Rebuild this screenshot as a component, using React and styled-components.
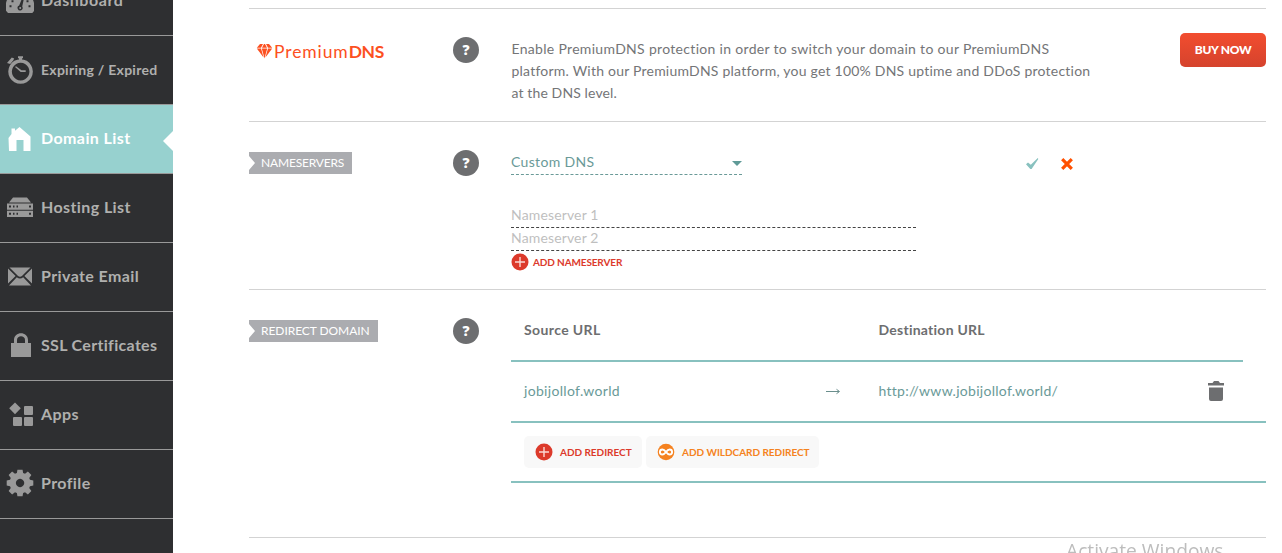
import React from "react";
import styled, { createGlobalStyle, css } from "styled-components";

const GlobalStyle = createGlobalStyle`
  *, *::before, *::after { box-sizing: border-box; }
  body {
    margin: 0;
    background: #fff;
    color: #6d6e70;
    font-family: Lato, "Open Sans", sans-serif;
    font-size: 14px;
    overflow: hidden;
  }
`;

const Page = styled.div`
  display: flex;
  width: 1282px;
  height: 553px;
  overflow: hidden;
`;

/* ---------- sidebar ---------- */

const Sidebar = styled.nav`
  flex: none;
  width: 173px;
  background: #2e2f31;
`;

const NavList = styled.ul`
  list-style: none;
  margin: -33px 0 0;
  padding: 0;
`;

const NavItem = styled.li`
  position: relative;
  display: flex;
  align-items: center;
  height: 69px;
  padding-bottom: ${(p) => (p.$small ? 0 : 2)}px;
  border-bottom: 1px solid #999;
  color: ${(p) => (p.$active ? "#fff" : "#b0b0ae")};
  background: ${(p) => (p.$active ? "#97d1cf" : "transparent")};

  ${(p) =>
    p.$active &&
    css`
      &::after {
        content: "";
        position: absolute;
        right: 0;
        top: 26px;
        border: solid transparent;
        border-width: 10px 10px 10px 0;
        border-right-color: #fff;
      }
    `}
`;

const NavIcon = styled.svg`
  flex: none;
  width: 28px;
  height: 28px;
  margin: 0 7px 0 6px;
  fill: ${(p) => (p.$active ? "#fff" : "#999")};
`;

const NavLabel = styled.span`
  font-size: ${(p) => p.$size || 16}px;
  font-weight: 700;
  line-height: 20px;
  letter-spacing: ${(p) => p.$track ?? 0.4}px;
  white-space: nowrap;
`;

/* ---------- main column ---------- */

const Main = styled.main`
  width: 1017px;
  margin-left: 76px;
  padding-top: 8px;
`;

const Section = styled.section`
  display: grid;
  grid-template-columns: 204px 58px 1fr;
  align-items: start;
  height: ${(p) => p.$height}px;
  padding-top: 28px;
  border-top: 1px solid #d3d3d3;
`;

const Help = styled.span`
  display: flex;
  align-items: center;
  justify-content: center;
  width: 26px;
  height: 26px;
  border-radius: 50%;
  background: #6d6e70;
  color: #fff;
  font: 800 14px/26px "Open Sans", sans-serif;
`;

const Tag = styled.span`
  display: inline-block;
  justify-self: start;
  width: ${(p) => p.$width}px;
  height: 22px;
  margin-top: 2px;
  padding-left: 12px;
  background: #abacb0;
  clip-path: polygon(0 0, 100% 0, 100% 100%, 0 100%, 0 18px, 6px 11px, 0 4px);
  color: #fff;
  font-size: 12px;
  line-height: 22px;
  letter-spacing: ${(p) => p.$track}px;
  white-space: nowrap;
`;

const Logo = styled.div`
  display: flex;
  align-items: center;
  height: 28px;
  padding-left: 7px;
  color: #fc5021;
  font-size: 17.5px;
  letter-spacing: 0.9px;
  white-space: nowrap;

  svg { margin-right: 1px; }
  b { letter-spacing: -0.4px; }
`;

const PremiumRow = styled.div`
  display: flex;
  justify-content: space-between;
  align-items: flex-start;
`;

const Description = styled.p`
  margin: 1px 0 0;
  padding-left: 0.5px;
  color: #747577;
  line-height: 22px;
  white-space: nowrap;
`;

const Line = styled.span`
  display: block;
  letter-spacing: ${(p) => p.$track}px;
`;

const BuyButton = styled.button`
  width: 86px;
  height: 34px;
  margin-top: -4px;
  padding: 0;
  border: 0;
  border-radius: 5px;
  background: linear-gradient(#f24d2f, #d5432d);
  color: #fff;
  font: 900 12px/34px Lato, sans-serif;
  letter-spacing: -0.3px;
`;

const SelectRow = styled.div`
  display: flex;
  align-items: flex-start;
`;

const Select = styled.div`
  display: flex;
  justify-content: space-between;
  align-items: center;
  width: 231px;
  height: 25px;
  padding-bottom: 1px;
  border-bottom: 1px dashed #6a9a98;
  color: #6a9a98;
  letter-spacing: 0.33px;

  &::after {
    content: "";
    margin-top: 3px;
    border: solid transparent;
    border-width: 5px 5px 0;
    border-top-color: #5f9a97;
  }
`;

const Actions = styled.div`
  display: flex;
  gap: 22px;
  margin: 8px 0 0 284px;
`;

const NameserverForm = styled.div`
  display: flex;
  flex-direction: column;
  width: 405px;
  margin-top: 30px;
`;

const NameserverInput = styled.input`
  height: 23px;
  padding: 0 0 3px;
  border: 0;
  border-bottom: 1px dashed #444;
  outline: 0;
  background: transparent;
  font: 14px/19px Lato, sans-serif;
  letter-spacing: 0.15px;

  &::placeholder { color: #bfbfbf; opacity: 1; }
`;

const AddLink = styled.a`
  display: flex;
  align-items: center;
  gap: 4px;
  height: 18px;
  margin-top: 2px;
  color: #dc3a2b;
  font-size: 10px;
  font-weight: 700;
  letter-spacing: -0.13px;
`;

/* ---------- redirect table ---------- */

const RedirectTable = styled.div`
  display: flex;
  flex-direction: column;
`;

const TableRow = styled.div`
  display: grid;
  grid-template-columns: 302px 52.5px 329px 1fr;
  align-items: center;
  height: 61px;
  padding: 0 0 2px 13px;
  border-bottom: 2px solid #88c1bf;
  color: #6a9a98;
`;

const TableHead = styled(TableRow)`
  width: 732px;
  height: 44px;
  padding-bottom: 18px;
  color: #6d6e70;
  font-weight: 700;
`;

const Cell = styled.span`
  letter-spacing: ${(p) => p.$track || 0}px;
  grid-column: ${(p) => p.$col || "auto"};
  line-height: 20px;
  white-space: nowrap;
`;

const TableFooter = styled.div`
  display: flex;
  align-items: center;
  gap: 4px;
  height: 60px;
  padding-left: 13px;
  border-bottom: 2px solid #88c1bf;
`;

const SoftButton = styled.button`
  display: flex;
  align-items: center;
  gap: 7px;
  width: ${(p) => p.$width}px;
  height: 32px;
  padding: 0 0 0 11px;
  border: 0;
  border-radius: 5px;
  background: #f8f8f8;
  color: ${(p) => p.$color};
  font: 700 10px/16px Lato, sans-serif;
  letter-spacing: -0.03px;
  white-space: nowrap;
`;

const Watermark = styled.div`
  position: fixed;
  left: 1066px;
  top: 538px;
  color: #bdbdbd;
  font: 19.2px/26px "Open Sans", sans-serif;
  white-space: nowrap;
`;

/* ---------- icons ---------- */

const shapes = {
  gauge: (
    <path fillRule="evenodd" d="M-.3 24.500V20a14.300 14.300 0 0 1 28.600 0v4.500l-2 2.500H2zM3.500 19.200h2v2h-2zm2-5h2v2h-2zm17 5h2v2h-2zm-2-5h2v2h-2zM16 12.500l1.800.6-1.600 7.500a2.500 2.500 0 1 1-3-1zM13.200 22a1 1 0 1 0 2 0 1 1 0 0 0-2 0z" />
  ),
  clock: (
    <>
      <path fillRule="evenodd" d="M14.500 3.200a12.300 12.300 0 1 0 .1 0zM14.700 6.800a8.800 8.800 0 1 1-.1 0z" />
      <path d="M12 .3h5v2h-1v2.500h-3V2.300h-1zM1 7 5.800 1.500l2.400 1-1 2-3 3.500zM9 11l1-.8 5.500 4h4.200v1.800h-5z" />
    </>
  ),
  home: <path d="M2.500 14 5.500 10V4.500H9v2.200L13.500 3 24.500 12.500V27H17.500V16h-7v11H3z" />,
  server: (
    <path fillRule="evenodd" d="M7 4.500h14l4 5H3zM1 10.500h26v6.200H1zm2 2v2h2v-2zm4 0v2h1.500v-2zm3.500 0v2H12v-2zm12.500 0v2h2v-2zM1 17.800h26V24H1zm2 2v2h2v-2zm4 0v2h1.500v-2zm3.500 0v2H12v-2zm12.500 0v2h2v-2z" />
  ),
  mail: (
    <path d="M3.500 5.500h21l-8.300 8.300q-2.200 1.800-4.400 0zM2 6.500l7.600 7.500L2 21.500zm24 0v15L18.400 14zM10.800 15.200q3.200 2.600 6.400 0L25 23.500H3z" />
  ),
  lock: (
    <path fillRule="evenodd" d="M5 12h3V9c0-9 14-9 14 0v3h3v14H5zm6 0h8V9c0-5-8-5-8 0z" />
  ),
  apps: (
    <>
      <path d="M9 2.500 14.800 8.300 9 14.200 3.200 8.300z" />
      <rect x="18" y="6" width="9" height="9" rx="1" />
      <rect x="7" y="17" width="9" height="9" rx="1" />
      <rect x="18" y="17" width="9" height="9" rx="1" />
    </>
  ),
  gear: (
    <path
      fillRule="evenodd"
      transform="translate(.7 .7) scale(.95)"
      d="M11.300 0h5.400l.6 3.500 2 .8L22.300 2 26 5.700l-2.300 3 .8 2 3.500.6v5.400l-3.500.6-.8 2 2.300 3-3.700 3.700-3-2.300-2 .8-.6 3.500h-5.400l-.6-3.500-2-.8-3 2.300L2 22.300l2.300-3-.8-2L0 16.700v-5.400l3.500-.6.8-2L2 5.700 5.700 2l3 2.300 2-.8zM14 9.600a4.400 4.400 0 1 0 .1 0z"
    />
  ),
};

const navItems = [
  { label: "Dashboard", icon: "gauge", track: 0.55 },
  { label: "Expiring / Expired", icon: "clock", size: 14, track: 0.27 },
  { label: "Domain List", icon: "home", active: true },
  { label: "Hosting List", icon: "server" },
  { label: "Private Email", icon: "mail" },
  { label: "SSL Certificates", icon: "lock", track: 0.32 },
  { label: "Apps", icon: "apps" },
  { label: "Profile", icon: "gear" },
];

const Diamond = () => (
  <svg width="17" height="16" viewBox="0 0 17 16" fill="#fc5021">
    <path d="M4 1h3L5 4.700H.8zM8 1h1l2 3.700H6zM10 1h3l3.200 3.700H12zM.8 5.500h4.200l2.600 9zM5.800 5.500h5.400L8.500 15.500zM12 5.500h4.200l-6.800 9z" />
  </svg>
);

const PlusIcon = () => (
  <svg width="18" height="18" viewBox="0 0 18 18">
    <circle cx="9" cy="9" r="8.500" fill="#dc3a2b" />
    <path d="M9 4v10M4 9h10" stroke="#fbd9d4" strokeWidth="1.400" />
  </svg>
);

const InfinityIcon = () => (
  <svg width="18" height="18" viewBox="0 0 18 18">
    <circle cx="9" cy="9" r="8.300" fill="#f58220" />
    <path d="M9 9C7.500 7 6.600 6.500 5.400 6.500a2.500 2.500 0 0 0 0 5C6.600 11.500 7.500 11 9 9s2.400-2.500 3.600-2.500a2.500 2.500 0 0 1 0 5C11.400 11.500 10.500 11 9 9z" fill="none" stroke="#fff" strokeWidth="1.900" />
  </svg>
);

const CheckIcon = () => (
  <svg width="13" height="12" viewBox="0 0 13 12" fill="#88c1bf">
    <path d="M0 6.200 2 4.500l2.800 2.300L11.800 0l.5 1L5.600 11H4.300z" />
  </svg>
);

const CrossIcon = () => (
  <svg width="12" height="12" viewBox="0 0 12 12">
    <path d="M1.200 1.200l9.600 9.600M10.800 1.200l-9.600 9.600" stroke="#ff5000" strokeWidth="3.200" />
  </svg>
);

const ArrowIcon = () => (
  <svg width="15" height="8" viewBox="0 0 15 8" fill="none" stroke="#6a8e8c">
    <path d="M0 4.500h13" />
    <path d="M10.500 2.300 13.500 4.500 10.500 6.700" />
  </svg>
);

const TrashIcon = () => (
  <svg width="16" height="20" viewBox="0 0 16 20" fill="#6d6e70">
    <path d="M0 2h4.500L6 0h4.500L12 2h4v2.500H0zM1 6.500h14V18a2 2 0 0 1-2 2H3a2 2 0 0 1-2-2z" />
  </svg>
);

export default function App() {
  return (
    <Page>
      <GlobalStyle />
      <Sidebar>
        <NavList>
          {navItems.map((item) => (
            <NavItem key={item.label} $active={item.active} $small={Boolean(item.size)}>
              <NavIcon $active={item.active} viewBox="0 0 28 28">
                {shapes[item.icon]}
              </NavIcon>
              <NavLabel $size={item.size} $track={item.track}>
                {item.label}
              </NavLabel>
            </NavItem>
          ))}
        </NavList>
      </Sidebar>

      <Main>
        <Section $height={113}>
          <Logo>
            <Diamond />
            Premium<b>DNS</b>
          </Logo>
          <Help>?</Help>
          <PremiumRow>
            <Description>
              <Line $track={0.31}>
                Enable PremiumDNS protection in order to switch your domain to our PremiumDNS
              </Line>
              <Line $track={0.22}>
                platform. With our PremiumDNS platform, you get 100% DNS uptime and DDoS protection
              </Line>
              <Line $track={0.12}>at the DNS level.</Line>
            </Description>
            <BuyButton>BUY NOW</BuyButton>
          </PremiumRow>
        </Section>

        <Section $height={168}>
          <Tag $width={103} $track={-0.18}>NAMESERVERS</Tag>
          <Help>?</Help>
          <div>
            <SelectRow>
              <Select>Custom DNS</Select>
              <Actions>
                <CheckIcon />
                <CrossIcon />
              </Actions>
            </SelectRow>
            <NameserverForm>
              <NameserverInput placeholder="Nameserver 1" />
              <NameserverInput placeholder="Nameserver 2" />
              <AddLink>
                <PlusIcon />
                ADD NAMESERVER
              </AddLink>
            </NameserverForm>
          </div>
        </Section>

        <Section $height={248}>
          <Tag $width={129} $track={-0.06}>REDIRECT DOMAIN</Tag>
          <Help>?</Help>
          <RedirectTable>
            <TableHead>
              <Cell $track={0.38}>Source URL</Cell>
              <Cell $track={0.25} $col="3">Destination URL</Cell>
            </TableHead>
            <TableRow>
              <Cell $track={0.32}>jobijollof.world</Cell>
              <ArrowIcon />
              <Cell $track={0.28}>http://www.jobijollof.world/</Cell>
              <TrashIcon />
            </TableRow>
            <TableFooter>
              <SoftButton $width={118} $color="#dc3a2b">
                <PlusIcon />
                ADD REDIRECT
              </SoftButton>
              <SoftButton $width={173} $color="#f58220">
                <InfinityIcon />
                ADD WILDCARD REDIRECT
              </SoftButton>
            </TableFooter>
          </RedirectTable>
        </Section>
        <Section $height={60} />
      </Main>
      <Watermark>Activate Windows</Watermark>
    </Page>
  );
}
